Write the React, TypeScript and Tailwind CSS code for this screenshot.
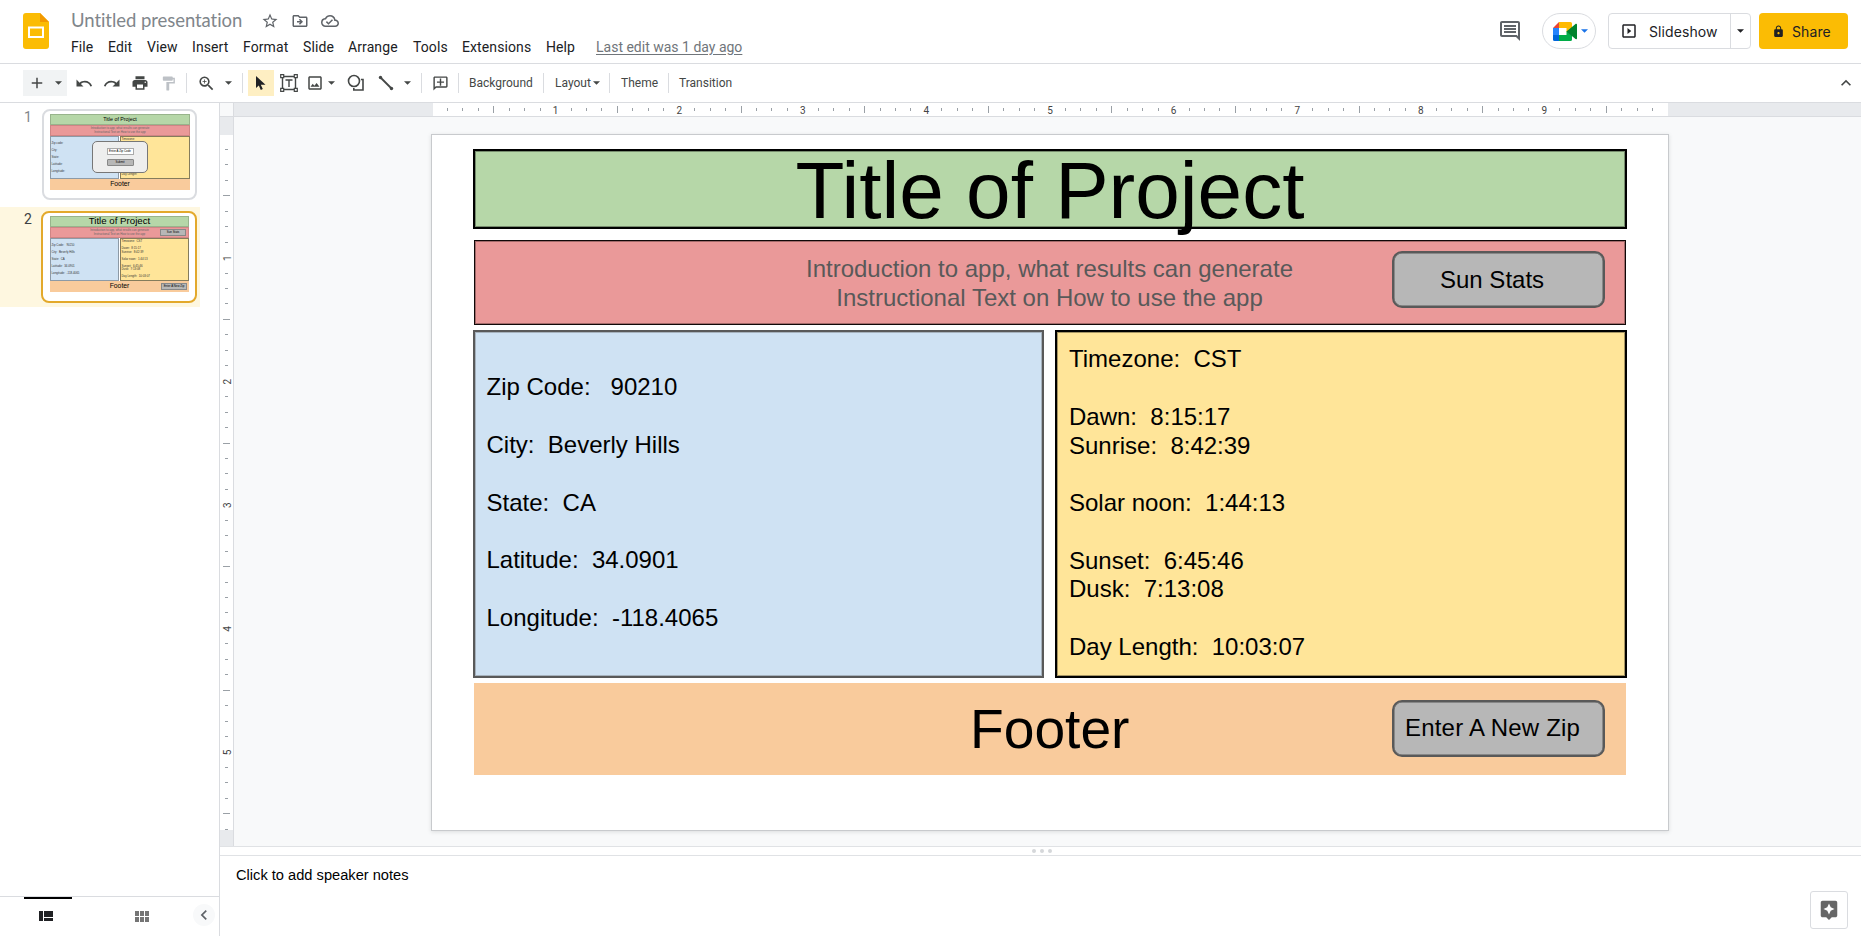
import React from "react";
import {
  MdAdd, MdPrint, MdFormatPaint, MdZoomIn, MdStarBorder,
  MdOutlineDriveFileMove, MdOutlineCloudDone, MdOutlineComment, MdOutlineSlideshow, MdLock,
  MdKeyboardArrowUp, MdChevronLeft, MdOutlineAddComment, MdOutlineImage, MdAssistant,
} from "react-icons/md";

const INCH = 123.6;

const menus: [string, string][] = [
  ["File", "w-[37px]"], ["Edit", "w-[39px]"], ["View", "w-[45px]"], ["Insert", "w-[51px]"],
  ["Format", "w-[60px]"], ["Slide", "w-[45px]"], ["Arrange", "w-[65px]"], ["Tools", "w-[49px]"],
  ["Extensions", "w-[84px]"], ["Help", "w-[50px]"],
];

function Caret({ className = "" }: { className?: string }) {
  return (
    <svg viewBox="0 0 8 4" className={"h-1 w-[7px] shrink-0 fill-current " + className}>
      <path d="M0 0h8L4 4z" />
    </svg>
  );
}

function Divider({ className = "" }: { className?: string }) {
  return <div className={"h-5 w-px shrink-0 bg-[#dadce0] " + className} />;
}

function HistoryArrow({ className = "" }: { className?: string }) {
  return (
    <svg viewBox="0 0 18 18" className={"size-[18px] fill-current " + className}>
      <path d="M1.500 5.500v7h7L5.900 9.900C7 9 8.300 8.500 9.800 8.500c2.600 0 4.800 1.600 5.600 4l1.700-.6C16 8.800 13.200 6.800 9.800 6.800c-2 0-3.800.7-5.200 1.900z" />
    </svg>
  );
}

function SlidesLogo() {
  return (
    <svg viewBox="0 0 26 36" className="h-9 w-[26px]">
      <path d="M3 0h14l9 9v24a3 3 0 0 1-3 3H3a3 3 0 0 1-3-3V3a3 3 0 0 1 3-3z" fill="#fbbc04" />
      <path d="M17 0l9 9h-9z" fill="#f29900" />
      <path d="M6 14.500h14v9.500H6z" fill="none" stroke="#fff" strokeWidth="2" />
    </svg>
  );
}

function MeetLogo() {
  return (
    <svg viewBox="0 0 24 19" className="h-[19px] w-6">
      <path d="M0 6l6-6v6z" fill="#ea4335" />
      <path d="M0 6h6v7H0z" fill="#2684fc" />
      <path d="M0 13h6v6H1.500A1.500 1.500 0 0 1 0 17.500z" fill="#0066da" />
      <path d="M6 0h11.500A1.500 1.500 0 0 1 19 1.500V6l-5.500 4V6H6z" fill="#ffba00" />
      <path d="M6 13h7.500V9.500L19 6v11.500a1.500 1.500 0 0 1-1.500 1.500H6z" fill="#00ac47" />
      <path d="M13.500 9.500L22.500 2c.6-.4 1.500 0 1.500.8v13.400c0 .8-.9 1.200-1.500.8z" fill="#00832d" />
    </svg>
  );
}

function Header() {
  return (
    <header className="flex h-16 shrink-0 border-b border-[#dadce0]">
      <div className="pt-[13px] pl-[23px]"><SlidesLogo /></div>
      <div className="flex flex-col pl-[22px]">
        <div className="flex h-[35px] items-center pt-[7px] text-[#5f6368]">
          <span className="w-[190px] font-['Lato'] text-[18.500px] tracking-[-0.060px] whitespace-nowrap text-[#80868b]">Untitled presentation</span>
          <MdStarBorder className="mr-[12px] size-[18px]" />
          <MdOutlineDriveFileMove className="mr-[12px] size-[18px]" />
          <MdOutlineCloudDone className="size-[18px]" />
        </div>
        <nav className="flex h-6 items-center text-[14px] tracking-[0.100px] text-[#202124]">
          {menus.map(([m, w]) => <span key={m} className={w + " whitespace-nowrap"}>{m}</span>)}
          <span className="tracking-normal text-[#70757a] underline underline-offset-2">Last edit was 1 day ago</span>
        </nav>
      </div>
      <div className="ml-auto flex items-start pt-[13px] pr-[13px] font-['Inter'] text-[14px] text-[#202124]">
        <MdOutlineComment className="mt-[6px] mr-[20px] size-6 text-[#5f6368]" />
        <div className="mr-[12px] flex h-9 w-[54px] items-center gap-[4px] rounded-full border border-[#dadce0] pl-[10px] text-[#1a73e8]">
          <MeetLogo /><Caret />
        </div>
        <div className="mr-[8px] flex h-9 w-[143px] rounded border border-[#dadce0]">
          <div className="flex flex-1 items-center border-r border-[#dadce0] pl-[11px]">
            <MdOutlineSlideshow className="mr-[11px] size-[18px]" />
            <span className="tracking-[0.100px]">Slideshow</span>
          </div>
          <div className="flex w-[19px] items-center justify-center"><Caret /></div>
        </div>
        <div className="flex h-9 w-[89px] items-center rounded bg-[#fbbc04] pl-[13px]">
          <MdLock className="mr-[7px] size-[13px]" />
          <span className="tracking-[0.100px]">Share</span>
        </div>
      </div>
    </header>
  );
}

function Toolbar() {
  return (
    <div className="flex h-[39px] shrink-0 items-center border-b border-[#dadce0] pl-[23px] text-[12px] text-[#444746]">
      <div className="flex h-[26px] w-11 items-center bg-[#f1f3f4]">
        <MdAdd className="ml-[5px] size-[18px]" /><Caret className="ml-[9px]" />
      </div>
      <HistoryArrow className="ml-[8px]" />
      <HistoryArrow className="ml-[10px] -scale-x-100" />
      <MdPrint className="ml-[10px] size-[18px]" />
      <MdFormatPaint className="ml-[11px] size-[17px] text-[#bdc1c6]" />
      <Divider className="ml-[9px]" />
      <MdZoomIn className="ml-[10px] size-[19px]" /><Caret className="ml-[9px]" />
      <Divider className="ml-[10px]" />
      <div className="ml-[5px] flex h-[26px] w-[26px] items-center justify-center bg-[#feefc3] text-[#202124]">
        <svg viewBox="0 0 10 14" className="h-[14px] w-[10px] fill-current"><path d="M0 0v12l2.800-2.600L4.800 14l2-.9-2-4.300H9.500z" /></svg>
      </div>
      <svg viewBox="0 0 18 18" className="ml-[6px] size-[18px] fill-none stroke-current" strokeWidth="1.400">
        <path d="M2.500 4v10M15.500 4v10M4 2.500h10M4 15.500h10M5.500 6h7M9 6v7" />
        <path d="M.7.7h3v3h-3zM14.300.7h3v3h-3zM.7 14.300h3v3h-3zM14.300 14.300h3v3h-3z" fill="#fff" strokeWidth="1.200" />
      </svg>
      <MdOutlineImage className="ml-[8px] size-[18px]" /><Caret className="ml-[4px]" />
      <svg viewBox="0 0 18 18" className="ml-[12px] size-[18px] fill-none stroke-current" strokeWidth="1.600">
        <circle cx="7" cy="7" r="5.500" /><path d="M14 5.500h2v10.500H6.800V14" />
      </svg>
      <svg viewBox="0 0 16 16" className="ml-[13px] size-[16px] fill-current stroke-current">
        <path d="M2.500 2.500l11 11" strokeWidth="1.800" /><circle cx="2.500" cy="2.500" r="1.700" stroke="none" /><circle cx="13.500" cy="13.500" r="1.700" stroke="none" />
      </svg>
      <Caret className="ml-[10px]" />
      <Divider className="ml-[10px]" />
      <MdOutlineAddComment className="ml-[10px] size-[17px] -scale-x-100" />
      <Divider className="ml-[9px]" />
      <span className="ml-[10px] w-[65px]">Background</span>
      <Divider className="ml-[9px]" />
      <span className="ml-[11px] w-[36px]">Layout</span><Caret className="ml-[2px]" />
      <Divider className="ml-[9px]" />
      <span className="ml-[11px] w-[38px]">Theme</span>
      <Divider className="ml-[9px]" />
      <span className="ml-[10px]">Transition</span>
      <MdKeyboardArrowUp className="mr-[5px] ml-auto size-5" />
    </div>
  );
}

function MiniLines({ lines }: { lines: string[] }) {
  return <div className="flex flex-col text-[2.900px] leading-[3.500px] whitespace-pre text-[#333]">{lines.map((l, i) => <span key={i}>{l || " "}</span>)}</div>;
}

const leftMini = ["Zip Code:   90210", "", "City:  Beverly Hills", "", "State:  CA", "", "Latitude:  34.0901", "", "Longitude:  -118.4065"];
const leftMiniEmpty = ["Zip code:", "", "City:", "", "State:", "", "Latitude:", "", "Longitude:"];
const rightMini = ["Timezone:  CST", "", "Dawn:  8:15:17", "Sunrise:  8:42:39", "", "Solar noon:  1:44:13", "", "Sunset:  6:45:46", "Dusk:  7:13:08", "", "Day Length:  10:03:07"];
const rightMiniEmpty = ["Timezone:", "", "Dawn:", "Sunrise:", "", "Solar noon:", "", "Sunset:", "Dusk:", "", "Day Length:"];

function Thumb({ active }: { active?: boolean }) {
  return (
    <div className={"relative flex flex-col rounded-lg border-2 bg-white font-['Liberation_Sans'] text-black " + (active ? "h-[92px] w-[156px] border-[#e3a92b] pt-[3px] pr-[6px] pl-[7px]" : "h-[91px] w-[155px] border-[#dadce0] pt-[3px] pr-[5px] pl-[6px]")}>
      <div className={"flex h-[11px] items-center justify-center border border-[#98b48c] bg-[#b6d7a8] whitespace-nowrap " + (active ? "text-[9.700px]" : "text-[5.300px]")}>Title of Project</div>
      <div className="flex h-[11px] items-center border border-[#cf8585] bg-[#ea9999]">
        <div className={"flex-1 text-center text-[2.900px] leading-[3.500px] whitespace-nowrap text-[#666] " + (active ? "pl-[28px]" : "")}>
          Introduction to app, what results can generate<br />Instructional Text on How to use the app
        </div>
        {active && <div className="mr-[2px] flex h-[7px] w-[26px] items-center justify-center border border-[#888] bg-[#b7b7b7] text-[2.900px]">Sun Stats</div>}
      </div>
      <div className="flex h-[43px] gap-px">
        <div className="flex w-[69px] items-center border border-[#8d9aa6] bg-[#cfe2f3] pl-[0.500px]"><MiniLines lines={active ? leftMini : leftMiniEmpty} /></div>
        <div className="flex flex-1 items-center border border-[#857c5c] bg-[#ffe599] pl-[0.500px]"><MiniLines lines={active ? rightMini : rightMiniEmpty} /></div>
      </div>
      <div className="flex h-[11px] items-center justify-center bg-[#f9cb9c] text-[6.800px]">
        Footer
        {active && <div className="absolute right-[8px] flex h-[7px] w-[26px] items-center justify-center border border-[#888] bg-[#b7b7b7] text-[2.900px] whitespace-nowrap">Enter A New Zip</div>}
      </div>
      {!active && (
        <div className="absolute top-[30px] left-[48px] flex h-[32px] w-[56px] flex-col items-center gap-[4px] rounded-[5px] border border-[#777] bg-[#eee] pt-[6px] text-[2.900px]">
          <div className="flex h-[7px] w-[27px] items-center justify-center border border-[#aaa] bg-white whitespace-nowrap">Enter A Zip Code</div>
          <div className="flex h-[7px] w-[27px] items-center justify-center rounded-[1px] border border-[#888] bg-[#b7b7b7]">Submit</div>
        </div>
      )}
    </div>
  );
}

function Filmstrip() {
  return (
    <aside className="flex w-[220px] shrink-0 flex-col border-r border-[#dadce0] text-[14px]">
      <div className="flex h-[101px] pt-[6px]">
        <span className="-mt-[2px] w-[42px] pl-[24px] text-[#80868b]">1</span><Thumb />
      </div>
      <div className="mt-[3px] flex h-[100px] w-[200px] bg-[#fef7e0] pt-[4px]">
        <span className="-mt-[2px] w-[41px] pl-[24px] text-[#3c4043]">2</span><Thumb active />
      </div>
      <div className="mt-auto flex h-[40px] items-start border-t border-[#dadce0]">
        <div className="ml-[24px] flex h-full w-12 justify-center border-t-2 border-black pt-[12px]">
          <svg viewBox="0 0 14 10" className="mr-[5px] h-[10px] w-[14px] fill-[#202124]"><path d="M0 0h4v10H0zM5 0h9v6H5zM5 7h9v3H5z" /></svg>
        </div>
        <svg viewBox="0 0 14 11" className="mt-[14px] ml-[63px] h-[11px] w-[14px] fill-[#757575]"><path d="M0 0h4v5H0zM5 0h4v5H5zM10 0h4v5h-4zM0 6h4v5H0zM5 6h4v5H5zM10 6h4v5h-4z" /></svg>
        <div className="mt-[7px] mr-[4px] ml-auto flex size-[22px] items-center justify-center rounded-full bg-[#f8f9fa] text-[#5f6368]"><MdChevronLeft className="size-5" /></div>
      </div>
    </aside>
  );
}

function Ruler({ vertical, inches, length }: { vertical?: boolean; inches: number; length: number }) {
  const marks = [];
  for (let i = 1; i / 8 < inches; i++) {
    const at = (i * INCH) / 8 - 1;
    if (i % 8 === 0) {
      marks.push(vertical
        ? <text key={i} transform={`translate(11 ${at + 0.5}) rotate(-90)`} textAnchor="middle">{i / 8}</text>
        : <text key={i} x={at} y="10.5" textAnchor="middle">{i / 8}</text>);
    } else {
      const half = i % 4 === 0 ? 3.5 : 1.5;
      const p = Math.floor(at);
      marks.push(vertical
        ? <path key={i} d={`M${6.5 - half} ${p + 0.5}h${half * 2}`} stroke="#9aa0a6" />
        : <path key={i} d={`M${p + 0.5} ${6.5 - half}v${half * 2}`} stroke="#9aa0a6" />);
    }
  }
  return (
    <svg width={vertical ? 13 : length} height={vertical ? length : 13} className="block shrink-0 bg-white fill-[#444] font-['Roboto'] text-[10px]">{marks}</svg>
  );
}

function Slide() {
  return (
    <div className="flex h-[695px] w-[1236px] flex-col bg-white pt-[14px] pl-[41px] font-['Liberation_Sans'] text-[24px] leading-[28.860px] text-black shadow-[0_0_0_1px_#c8cacd,0_1px_4px_1px_rgba(60,64,67,0.15)]">
      <div className="flex h-[80px] w-[1154px] items-center justify-center border-2 border-black bg-[#b6d7a8] pt-[3px] text-[80.100px] leading-none whitespace-nowrap shadow-[inset_0_0_0_1px_rgba(0,0,0,0.35)]">
        Title of Project
      </div>
      <div className="mt-[11px] ml-px flex h-[85px] w-[1152px] items-center border border-[#100808] bg-[#ea9999] shadow-[inset_0_0_0_1px_rgba(0,0,0,0.3)]">
        <div className="w-[917px] pt-[3px] pl-[232px] text-center whitespace-nowrap text-[#595959]">
          Introduction to app, what results can generate<br />Instructional Text on How to use the app
        </div>
        <div className="mb-[6px] flex h-[57px] w-[213px] items-center rounded-[10px] border-2 border-[#595959] bg-[#b7b7b7] pt-px pl-[46px] shadow-[inset_0_0_0_0.500px_#595959]">Sun Stats</div>
      </div>
      <div className="mt-[5px] flex gap-[11px]">
        <div className="flex h-[348px] w-[571px] items-center border-2 border-[#595959] bg-[#cfe2f3] pb-[2px] pl-[11.500px] whitespace-pre shadow-[inset_0_0_0_1px_rgba(89,89,89,0.35)]">
          {"Zip Code:   90210\n\nCity:  Beverly Hills\n\nState:  CA\n\nLatitude:  34.0901\n\nLongitude:  -118.4065"}
        </div>
        <div className="flex h-[348px] w-[572px] items-center border-2 border-black bg-[#ffe599] pb-[1px] pl-[12px] leading-[28.800px] whitespace-pre shadow-[inset_0_0_0_1px_rgba(0,0,0,0.35)]">
          {"Timezone:  CST\n\nDawn:  8:15:17\nSunrise:  8:42:39\n\nSolar noon:  1:44:13\n\nSunset:  6:45:46\nDusk:  7:13:08\n\nDay Length:  10:03:07"}
        </div>
      </div>
      <div className="mt-[5px] ml-px flex h-[92px] w-[1152px] items-center bg-[#f9cb9c]">
        <div className="w-[918px] pt-px pl-[496px] text-[55.200px] leading-none">Footer</div>
        <div className="mb-px flex h-[57px] w-[213px] items-center rounded-[10px] border-2 border-[#595959] bg-[#b7b7b7] pl-[11px] tracking-[0.200px] whitespace-nowrap shadow-[inset_0_0_0_0.500px_#595959]">Enter A New Zip</div>
      </div>
    </div>
  );
}

export default function App() {
  return (
    <div className="flex h-[936px] w-[1861px] flex-col overflow-hidden bg-white font-['Roboto',sans-serif]">
      <Header />
      <Toolbar />
      <div className="flex min-h-0 flex-1">
        <Filmstrip />
        <main className="flex flex-1 flex-col">
          <div className="flex h-[14px] border-b border-[#dadce0] bg-[#e8eaed]">
            <div className="w-[14px] border-r border-[#dadce0] bg-[#f8f9fa]" />
            <div className="w-[199px]" />
            <Ruler inches={10} length={1235} />
          </div>
          <div className="flex h-[729px] bg-[#f8f9fa]">
            <div className="flex w-[14px] flex-col border-r border-[#dadce0] bg-[#e8eaed] pt-[18px]">
              <Ruler vertical inches={5.63} length={695} />
            </div>
            <div className="pt-[18px] pl-[198px]"><Slide /></div>
          </div>
          <div className="flex h-[10px] items-center justify-center gap-[4px] border-y border-[#e0e2e5] pl-[2px]">
            <i className="size-1 rounded-full bg-[#d5d7da]" /><i className="size-1 rounded-full bg-[#d5d7da]" /><i className="size-1 rounded-full bg-[#d5d7da]" />
          </div>
          <div className="flex flex-1 justify-between pl-[16px] font-['Liberation_Sans'] text-[14.650px] text-black">
            <span className="pt-[9px]">Click to add speaker notes</span>
            <div className="mt-[35px] mr-[13px] flex size-[38px] items-center justify-center rounded-[3px] border border-[#dadce0] text-[#666]"><MdAssistant className="size-[22px]" /></div>
          </div>
        </main>
      </div>
    </div>
  );
}
